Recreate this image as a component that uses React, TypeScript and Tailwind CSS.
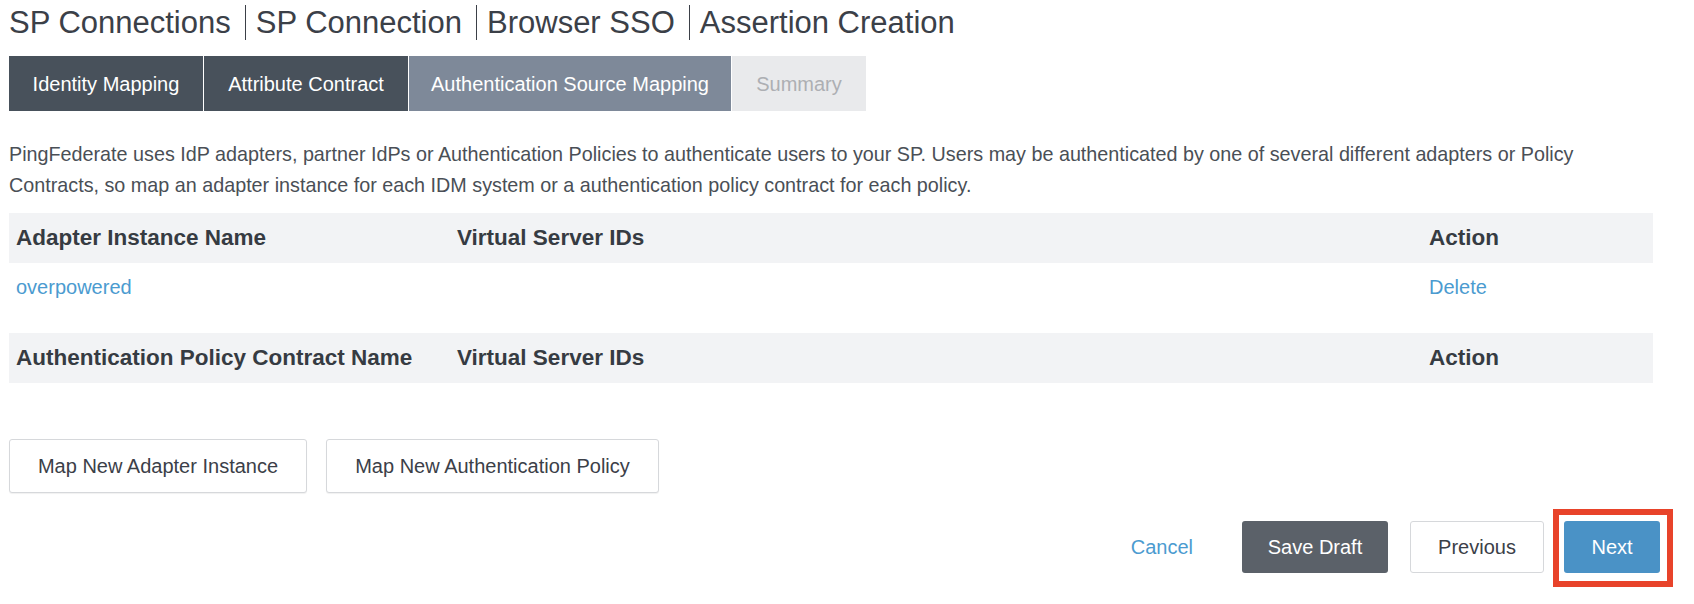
import React from "react";

const crumbs = ["SP Connections", "SP Connection", "Browser SSO", "Assertion Creation"];

const tabs = [
  { label: "Identity Mapping", w: "w-[194px]", cls: "bg-[#48515b] text-white" },
  { label: "Attribute Contract", w: "w-[204px]", cls: "bg-[#48515b] text-white" },
  { label: "Authentication Source Mapping", w: "w-[322px]", cls: "bg-[#7e8999] text-white" },
  { label: "Summary", w: "w-[134px]", cls: "bg-[#e9eaec] text-[#adafb3]" },
];

function HeaderRow({ first }: { first: string }) {
  return (
    <div className="grid h-[50px] grid-cols-[441px_972px_1fr] items-center bg-[#f2f3f5] text-[22.5px] font-bold text-[#363b42]">
      <div className="pl-[7px]">{first}</div>
      <div className="pl-[7px]">Virtual Server IDs</div>
      <div className="pl-[7px]">Action</div>
    </div>
  );
}

export default function App() {
  return (
    <div className="min-h-screen bg-white pl-[9px] font-['Liberation_Sans',Arial,sans-serif] text-[#3b4048]">
      <div className="flex h-[45px] items-center text-[31px] leading-[42px]">
        {crumbs.map((c, i) => (
          <React.Fragment key={c}>
            {i > 0 && <span className="ml-[14px] mr-[10px] h-[35px] w-px bg-[#3b4048]" />}
            <span>{c}</span>
          </React.Fragment>
        ))}
      </div>

      <div className="mt-[11px] flex gap-px">
        {tabs.map((t) => (
          <div
            key={t.label}
            className={`flex h-[55px] items-center justify-center text-[20px] ${t.w} ${t.cls}`}
          >
            {t.label}
          </div>
        ))}
      </div>

      <p className="mt-[28px] w-[1600px] text-[19.75px] leading-[31px] text-[#4a4f56]">
        PingFederate uses IdP adapters, partner IdPs or Authentication Policies to authenticate users to your SP. Users
        may be authenticated by one of several different adapters or Policy Contracts, so map an adapter instance for each
        IDM system or a authentication policy contract for each policy.
      </p>

      <div className="mt-[12px] w-[1644px]">
        <HeaderRow first="Adapter Instance Name" />
        <div className="grid h-[48px] grid-cols-[441px_972px_1fr] items-center text-[20px] text-[#4b9bd0]">
          <div className="pl-[7px]">overpowered</div>
          <div className="pl-[7px]" />
          <div className="pl-[7px]">Delete</div>
        </div>
      </div>

      <div className="mt-[22px] w-[1644px]">
        <HeaderRow first="Authentication Policy Contract Name" />
      </div>

      <div className="mt-[56px] flex gap-[19px] text-[20px] text-[#3b4048]">
        <button className="h-[54px] w-[298px] rounded-[3px] border border-[#d6d8db] bg-white shadow-[0_1px_1px_rgba(0,0,0,0.06)]">
          Map New Adapter Instance
        </button>
        <button className="h-[54px] w-[333px] rounded-[3px] border border-[#d6d8db] bg-white shadow-[0_1px_1px_rgba(0,0,0,0.06)]">
          Map New Authentication Policy
        </button>
      </div>

      <div className="mt-[28px] flex w-[1651px] items-center justify-end text-[20px]">
        <span className="mr-[49px] text-[#4b9bd0]">Cancel</span>
        <button className="mr-[22px] h-[52px] w-[146px] rounded-[3px] bg-[#5b6169] text-white">Save Draft</button>
        <button className="mr-[20px] h-[52px] w-[134px] rounded-[3px] border border-[#d6d8db] bg-white text-[#3b4048]">
          Previous
        </button>
        <div className="relative">
          <button className="h-[52px] w-[96px] rounded-[3px] bg-[#4a92c6] text-white">Next</button>
          <span className="pointer-events-none absolute -top-[12px] -right-[13px] -bottom-[14px] -left-[11px] border-[6px] border-[#e8432a]" />
        </div>
      </div>
    </div>
  );
}
